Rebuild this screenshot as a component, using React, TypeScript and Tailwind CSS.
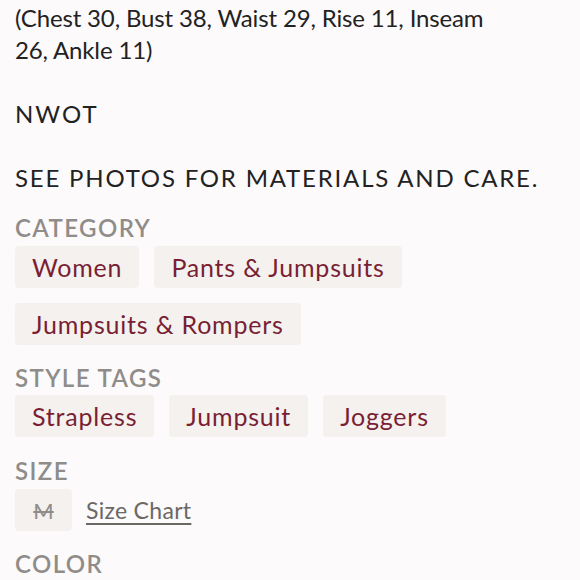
import React from 'react';

const chip =
  'inline-flex items-center h-[42px] px-[17px] rounded-[4px] bg-[#f4f1ef] text-[#7a1f33] text-[25px] leading-none tracking-[0.8px]';

const Label = ({ children }: { children: React.ReactNode }) => (
  <h3 className="text-[24px] leading-[28px] font-semibold text-[#8f8c89] tracking-[1.4px]">{children}</h3>
);

const App: React.FC = () => {
  const category = ['Women', 'Pants & Jumpsuits', 'Jumpsuits & Rompers'];
  const styleTags = ['Strapless', 'Jumpsuit', 'Joggers'];

  return (
    <div className="w-[580px] h-[580px] overflow-hidden bg-[#fcfafb] px-[15px] font-['Lato',sans-serif]">
      <div className="text-[24px] leading-[32px] text-[#222] pt-[2px]">
        <p className="tracking-[-0.15px]">
          (Chest 30, Bust 38, Waist 29, Rise 11, Inseam
          <br />
          26, Ankle 11)
        </p>
        <p className="mt-[32px] tracking-[2px]">NWOT</p>
        <p className="mt-[32px] tracking-[1.8px]">SEE PHOTOS FOR MATERIALS AND CARE.</p>
      </div>

      <div className="mt-[20px]">
        <Label>CATEGORY</Label>
        <div className="flex flex-wrap gap-[15px] mt-[4px]">
          {category.map((c) => (
            <span key={c} className={chip}>
              {c}
            </span>
          ))}
        </div>
      </div>

      <div className="mt-[19px]">
        <Label>STYLE TAGS</Label>
        <div className="flex flex-wrap gap-[15px] mt-[3px]">
          {styleTags.map((c) => (
            <span key={c} className={chip}>
              {c}
            </span>
          ))}
        </div>
      </div>

      <div className="mt-[20px]">
        <Label>SIZE</Label>
        <div className="flex items-center gap-[14px] mt-[4px]">
          <span className="inline-flex items-center justify-center h-[42px] w-[57px] rounded-[4px] bg-[#f4f1ef] text-[#8f8c89] text-[22px] line-through">
            M
          </span>
          <a href="#" className="text-[23px] text-[#6b6866] underline underline-offset-[4px] tracking-[0.3px]">
            Size Chart
          </a>
        </div>
      </div>

      <div className="mt-[19px]">
        <Label>COLOR</Label>
      </div>
    </div>
  );
};

export default App;
